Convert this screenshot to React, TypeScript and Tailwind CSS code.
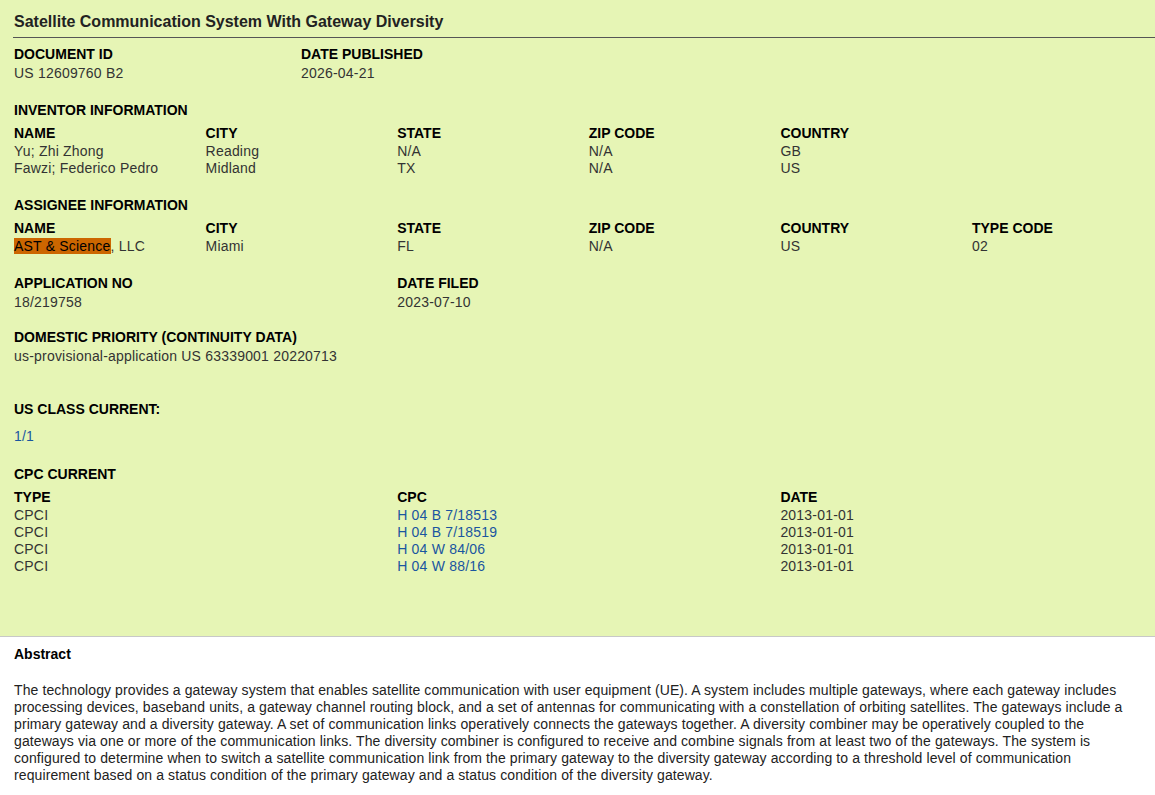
export default function App() {
  const H = "font-bold text-[14px] leading-[20px] text-black";
  const V = "text-[14px] tracking-[0.2px] leading-[17px] text-[#333]";
  const L = "text-[14px] tracking-[0.2px] leading-[17px] text-[#1a56a0]";
  const g = "grid grid-cols-[repeat(6,191.6px)]";
  return (
    <div className="w-[1155px] min-h-[795px] bg-white" style={{ fontFamily: '"Liberation Sans", Arial, sans-serif' }}>
      <div className="bg-[#e6f5b5] h-[637px] border-b border-[#c8c8c8] pl-[14px]">
        <div className="pt-[12px] pb-[5px] border-b border-[#555] -ml-[1px] pl-[1px] font-bold text-[16px] leading-[20px] text-[#222]">Satellite Communication System With Gateway Diversity</div>
        <div className="flex mt-[6px]">
          <div className="w-[287px]"><div className={H}>DOCUMENT ID</div><div className={V + " mt-[1px]"}>US 12609760 B2</div></div>
          <div><div className={H}>DATE PUBLISHED</div><div className={V + " mt-[1px]"}>2026-04-21</div></div>
        </div>
        <div className={H + " mt-[18px]"}>INVENTOR INFORMATION</div>
        <div className={g + " mt-[3px]"}>
          {["NAME", "CITY", "STATE", "ZIP CODE", "COUNTRY"].map(h => <div key={h} className={H}>{h}</div>)}
          <div />
          {["Yu; Zhi Zhong", "Reading", "N/A", "N/A", "GB", "", "Fawzi; Federico Pedro", "Midland", "TX", "N/A", "US", ""].map((v, i) => <div key={i} className={V}>{v}</div>)}
        </div>
        <div className={H + " mt-[18px]"}>ASSIGNEE INFORMATION</div>
        <div className={g + " mt-[3px]"}>
          {["NAME", "CITY", "STATE", "ZIP CODE", "COUNTRY", "TYPE CODE"].map(h => <div key={h} className={H}>{h}</div>)}
          <div className={V}><span className="bg-[#cc6600] text-black">AST &amp; Science</span>, LLC</div>
          {["Miami", "FL", "N/A", "US", "02"].map((v, i) => <div key={i} className={V}>{v}</div>)}
        </div>
        <div className={g + " mt-[18px]"}>
          <div className="col-span-2"><div className={H}>APPLICATION NO</div><div className={V + " mt-[1px]"}>18/219758</div></div>
          <div className="col-span-4"><div className={H}>DATE FILED</div><div className={V + " mt-[1px]"}>2023-07-10</div></div>
        </div>
        <div className={H + " mt-[16px]"}>DOMESTIC PRIORITY (CONTINUITY DATA)</div>
        <div className={V + " mt-[1px]"}>us-provisional-application US 63339001 20220713</div>
        <div className={H + " mt-[34px]"}>US CLASS CURRENT:</div>
        <div className={L + " mt-[9px]"}>1/1</div>
        <div className={H + " mt-[19px]"}>CPC CURRENT</div>
        <div className={g + " mt-[3px]"}>
          <div className={H + " col-span-2"}>TYPE</div><div className={H + " col-span-2"}>CPC</div><div className={H + " col-span-2"}>DATE</div>
          {["H 04 B 7/18513", "H 04 B 7/18519", "H 04 W 84/06", "H 04 W 88/16"].flatMap((c) => [
            <div key={c + "a"} className={V + " col-span-2"}>CPCI</div>,
            <div key={c + "b"} className={L + " col-span-2"}>{c}</div>,
            <div key={c + "c"} className={V + " col-span-2"}>2013-01-01</div>,
          ])}
        </div>
      </div>
      <div className="px-[14px]">
        <div className="font-bold text-[14px] leading-[20px] text-black mt-[7px]">Abstract</div>
        <p className="text-[14px] tracking-[0.1px] leading-[17px] text-[#222] mt-[18px] pr-[10px]">The technology provides a gateway system that enables satellite communication with user equipment (UE). A system includes multiple gateways, where each gateway includes processing devices, baseband units, a gateway channel routing block, and a set of antennas for communicating with a constellation of orbiting satellites. The gateways include a primary gateway and a diversity gateway. A set of communication links operatively connects the gateways together. A diversity combiner may be operatively coupled to the gateways via one or more of the communication links. The diversity combiner is configured to receive and combine signals from at least two of the gateways. The system is configured to determine when to switch a satellite communication link from the primary gateway to the diversity gateway according to a threshold level of communication requirement based on a status condition of the primary gateway and a status condition of the diversity gateway.</p>
      </div>
    </div>
  );
}
